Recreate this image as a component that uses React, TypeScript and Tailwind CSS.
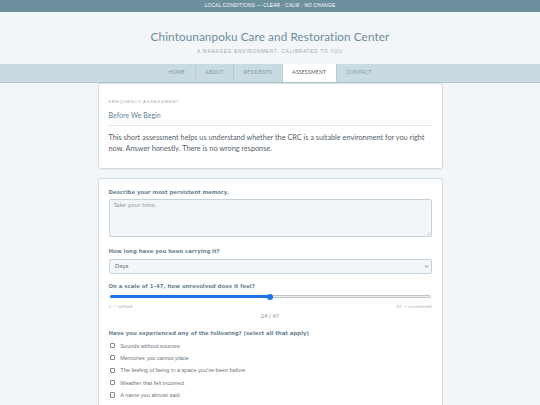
import { ChevronDown } from "lucide-react";

const navItems = ["HOME", "ABOUT", "RESIDENTS", "ASSESSMENT", "CONTACT"];

const experiences = [
  "Sounds without sources",
  "Memories you cannot place",
  "The feeling of being in a space you've been before",
  "Weather that felt incorrect",
  "A name you almost said",
];

const Label = ({ children, className = "" }: { children: React.ReactNode; className?: string }) => (
  <div className={`font-['DejaVu_Sans',sans-serif] font-bold text-[5.4px] leading-[6px] text-[#6a8393] ${className}`}>
    {children}
  </div>
);

export default function App() {
  const value = 24;
  const pct = ((value - 1) / 46) * 100;

  return (
    <div className="min-h-screen bg-[#f3f6f9] font-['Lato',sans-serif]">
      <div className="h-[12px] bg-[#6d909f] flex items-center justify-center font-['Liberation_Sans',sans-serif] text-[4.7px] tracking-[0.06em] text-white">
        LOCAL CONDITIONS — CLEAR · CALM · NO CHANGE
      </div>

      <header className="h-[52px] flex flex-col items-center pt-[18px]">
        <h1 className="text-[11.7px] leading-[12px] text-[#6b8c9d] tracking-[0.01em]">
          Chintounanpoku Care and Restoration Center
        </h1>
        <p className="mt-[7px] font-['Liberation_Sans',sans-serif] text-[4.7px] leading-[5px] tracking-[0.17em] text-[#9aa5ac]">
          A MANAGED ENVIRONMENT, CALIBRATED TO YOU
        </p>
      </header>

      <nav className="h-[19px] bg-[#c9dbe2] border-b border-[#aec5ce] flex justify-center">
        {navItems.map((item, i) => (
          <div
            key={item}
            className={`px-[9.5px] flex items-center text-[5.1px] tracking-[0.04em] ${
              i > 0 ? "border-l border-[#b6ccd5]" : ""
            } ${item === "ASSESSMENT" ? "bg-white text-[#3f5b6a]" : "text-[#7d97a5]"}`}
          >
            {item}
          </div>
        ))}
      </nav>

      <main className="w-[345px] mx-auto">
        <section className="bg-white border border-[#d3dee4] rounded-[3px] shadow-[0_0.5px_1px_rgba(0,0,0,0.05)] pt-[15px] px-[10px] pb-[14px]">
          <div className="font-['Liberation_Sans',sans-serif] text-[4.4px] leading-[5px] tracking-[0.14em] text-[#a3adb3]">
            FREQUENCY ASSESSMENT
          </div>
          <h2 className="mt-[7px] pb-[5.5px] border-b border-[#e3e9ed] text-[7px] leading-[8px] font-medium text-[#6a8b9c]">
            Before We Begin
          </h2>
          <p className="mt-[6px] text-[7.3px] leading-[11px] text-[#56626b]">
            This short assessment helps us understand whether the CRC is a suitable environment for you right now.
            Answer honestly. There is no wrong response.
          </p>
        </section>

        <section className="mt-[9px] bg-white border border-[#d3dee4] rounded-t-[3px] border-b-0 pt-[10px] px-[10px] pb-[10px] font-['DejaVu_Sans',sans-serif]">
          <Label>Describe your most persistent memory.</Label>
          <div className="relative mt-[4px] h-[38px] bg-[#f2f6f9] border border-[#c6d2d9] rounded-[2px] px-[4px] pt-[2.5px] text-[5.6px] leading-[7px] text-[#8a949a]">
            Take your time.
            <svg className="absolute right-[1px] bottom-[1px]" width="4" height="4" viewBox="0 0 4 4">
              <path d="M4 1L1 4M4 2.6L2.6 4" stroke="#a0a8ad" strokeWidth="0.4" />
            </svg>
          </div>

          <Label className="mt-[11px]">How long have you been carrying it?</Label>
          <div className="mt-[5px] h-[15px] bg-[#f2f6f9] border border-[#c6d2d9] rounded-[2px] pl-[5.5px] pr-[2px] flex items-center justify-between text-[5.4px] text-[#5c6870]">
            <span>Days</span>
            <ChevronDown className="w-[5px] h-[5px] text-[#333]" strokeWidth={3} />
          </div>

          <Label className="mt-[9px]">On a scale of 1–47, how unresolved does it feel?</Label>
          <div className="mt-[5px] h-[6px] relative flex items-center mx-[1px]">
            <div className="w-full h-[3px] rounded-full bg-[#efefef] border border-[#c4c4c4]" />
            <div
              className="absolute left-0 h-[3px] rounded-full bg-[#1a73e8]"
              style={{ width: `${pct}%` }}
            />
            <div
              className="absolute w-[6px] h-[6px] rounded-full bg-[#1a73e8] -translate-x-1/2"
              style={{ left: `${pct}%` }}
            />
          </div>
          <div className="mt-[4.5px] flex justify-between text-[4.2px] leading-[5px] text-[#a6afb5]">
            <span>1 — settled</span>
            <span>47 — unresolved</span>
          </div>
          <div className="mt-[3.5px] text-center text-[5.2px] leading-[6px] text-[#7d8b94]">
            {value} / 47
          </div>

          <Label className="mt-[11px]">Have you experienced any of the following? (select all that apply)</Label>
          <div className="mt-[7px] flex flex-col gap-[6.35px]">
            {experiences.map((e) => (
              <div key={e} className="flex items-center h-[6px] pl-[1.5px]">
                <span className="w-[5.3px] h-[5.3px] border-[0.7px] border-[#7f888e] rounded-[1px] bg-white" />
                <span className="ml-[5px] font-['Liberation_Sans',sans-serif] text-[5.6px] leading-[6px] text-[#6a757d]">
                  {e}
                </span>
              </div>
            ))}
          </div>
        </section>
      </main>
    </div>
  );
}
